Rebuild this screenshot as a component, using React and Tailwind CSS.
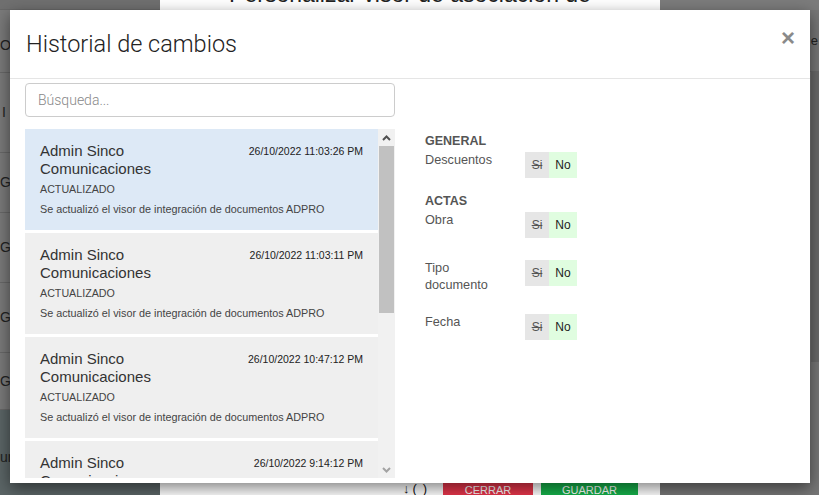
import React from "react";

const cambios = [
  { fecha: "26/10/2022 11:03:26 PM", activo: true },
  { fecha: "26/10/2022 11:03:11 PM" },
  { fecha: "26/10/2022 10:47:12 PM" },
  { fecha: "26/10/2022 9:14:12 PM" },
];

const Toggle = () => (
  <div className="flex h-[26px] text-[12px] leading-[26px]">
    <span className="w-[24px] bg-[#e6e6e6] text-center text-[#555] line-through">Si</span>
    <span className="w-[28px] bg-[#e0fde0] text-center text-[#222]">No</span>
  </div>
);

const Campo = ({ label, className = "" }) => (
  <div className={`flex items-start ${className}`}>
    <div className="w-[80px] text-[12.7px] leading-[17px] text-[#555]">{label}</div>
    <div className="ml-[20px]">
      <Toggle />
    </div>
  </div>
);

const Fondo = () => (
  <div className="flex h-full w-full">
    {/* tabla de atrás, a la izquierda */}
    <div className="flex h-full w-[160px] flex-col bg-[#7a7a7a] text-[14px] text-[#222]">
      <div className="h-[10px] border-b border-[#686868] bg-[#707070]" />
      <div className="flex h-[63px] items-center border-b border-[#686868] pt-[8px]">ON</div>
      <div className="flex h-[80px] items-center border-b border-[#686868] pl-[2px]">I</div>
      <div className="flex h-[60px] items-center border-b border-[#686868]">G</div>
      <div className="flex h-[70px] items-center border-b border-[#686868]">G</div>
      <div className="flex h-[70px] items-center border-b border-[#686868]">G</div>
      <div className="flex h-[57px] items-center border-b border-[#686868]">G</div>
      <div className="flex flex-1 items-center bg-[#5b6566] pt-[10px]">ur</div>
    </div>

    {/* modal de atrás */}
    <div className="flex h-full w-[500px] flex-col justify-between bg-white">
      <div className="mt-[-21px] text-center text-[23px] leading-[30px] text-[#222]">
        Personalizar visor de asociación de
      </div>
      <div className="flex h-[12px] items-start overflow-visible">
        <div className="ml-[243px] flex h-[12px] w-[34px] items-start text-[13px] leading-[12px] text-[#111]">
          <span className="font-bold">↓</span>
          <span className="ml-[3px]">(</span>
          <span className="ml-[6px]">)</span>
        </div>
        <div className="ml-[6px] flex h-[20px] w-[90px] justify-center bg-[#e5354a] pt-[1px] text-[11px] leading-[12px] text-white">
          CERRAR
        </div>
        <div className="ml-[8px] flex h-[20px] w-[97px] justify-center bg-[#16b04a] pt-[1px] text-[11px] leading-[12px] text-white">
          GUARDAR
        </div>
      </div>
    </div>

    {/* a la derecha */}
    <div className="flex h-full flex-1 flex-col bg-[#777777]">
      <div className="h-[10px] bg-[#7c7c7c]" />
      <div className="flex h-[62px] items-center justify-end border-b border-[#6a6a6a] pr-[1px] text-[13px] text-[#222]">
        e
      </div>
      <div className="ml-auto h-[290px] w-[8px] bg-[#6a6a6a]" />
    </div>
  </div>
);

export default function App() {
  return (
    <div
      className="relative h-[495px] w-[819px] overflow-hidden"
      style={{ fontFamily: '"Liberation Sans", Arial, sans-serif' }}
    >
      <Fondo />

      <div className="absolute left-[10px] top-[10px] flex h-[473px] w-[800px] flex-col bg-white shadow-[0_5px_15px_rgba(0,0,0,0.5)]">
        <div className="flex h-[69px] items-center justify-between border-b border-[#e5e5e5] pl-[16px] pr-[15px]">
          <h2 className="font-['Roboto',sans-serif] text-[23.5px] font-light leading-[28px] text-[#222]">
            Historial de cambios
          </h2>
          <button className="mb-[12px] text-[24px] font-bold leading-[24px] text-[#8a8a8a]">×</button>
        </div>

        <div className="flex min-h-0 flex-1 pl-[15px]">
          {/* columna izquierda */}
          <div className="flex w-[370px] flex-col pt-[4px]">
            <div className="flex h-[34px] items-center rounded-[4px] border border-[#cccccc] px-[12px] font-['Roboto',sans-serif] text-[14px] font-light text-[#888]">
              Búsqueda...
            </div>

            <div className="mt-[12px] flex h-[349px] bg-white">
              <div className="h-full w-[353px] overflow-hidden">
                {cambios.map((c, i) => (
                  <div
                    key={i}
                    className={`mb-[3px] h-[101px] pl-[15px] pr-[15px] pt-[13px] text-[#333] ${
                      c.activo ? "bg-[#dde9f6]" : "bg-[#efefef]"
                    }`}
                  >
                    <div className="flex items-start justify-between">
                      <div className="w-[180px] text-[15px] leading-[18px]">Admin Sinco Comunicaciones</div>
                      <div className="text-[10.5px] leading-[18px] text-[#222]">{c.fecha}</div>
                    </div>
                    <div className="mt-[4px] text-[10.7px] leading-[14px] text-[#444]">ACTUALIZADO</div>
                    <div className="mt-[6px] text-[10.8px] leading-[14px] text-[#444]">
                      Se actualizó el visor de integración de documentos ADPRO
                    </div>
                  </div>
                ))}
              </div>

              {/* barra de desplazamiento */}
              <div className="flex h-full w-[17px] flex-col bg-[#f1f1f1]">
                <div className="flex h-[17px] items-center justify-center">
                  <svg width="9" height="6" viewBox="0 0 9 6">
                    <polyline points="1,5 4.5,1.5 8,5" fill="none" stroke="#505050" strokeWidth="2" />
                  </svg>
                </div>
                <div className="mx-[1px] h-[167px] bg-[#c1c1c1]" />
                <div className="flex-1" />
                <div className="flex h-[17px] items-center justify-center">
                  <svg width="9" height="6" viewBox="0 0 9 6">
                    <polyline points="1,1 4.5,4.5 8,1" fill="none" stroke="#a3a3a3" strokeWidth="2" />
                  </svg>
                </div>
              </div>
            </div>
          </div>

          {/* columna derecha */}
          <div className="ml-[30px] flex flex-col pt-[54px]">
            <div className="text-[12.5px] font-bold leading-[16px] text-[#555]">GENERAL</div>
            <Campo label="Descuentos" className="mt-[3px]" />

            <div className="mt-[15px] text-[12.5px] font-bold leading-[16px] text-[#555]">ACTAS</div>
            <Campo label="Obra" className="mt-[3px]" />
            <Campo label="Tipo documento" className="mt-[22px]" />
            <Campo label="Fecha" className="mt-[20px]" />
          </div>
        </div>
      </div>
    </div>
  );
}
